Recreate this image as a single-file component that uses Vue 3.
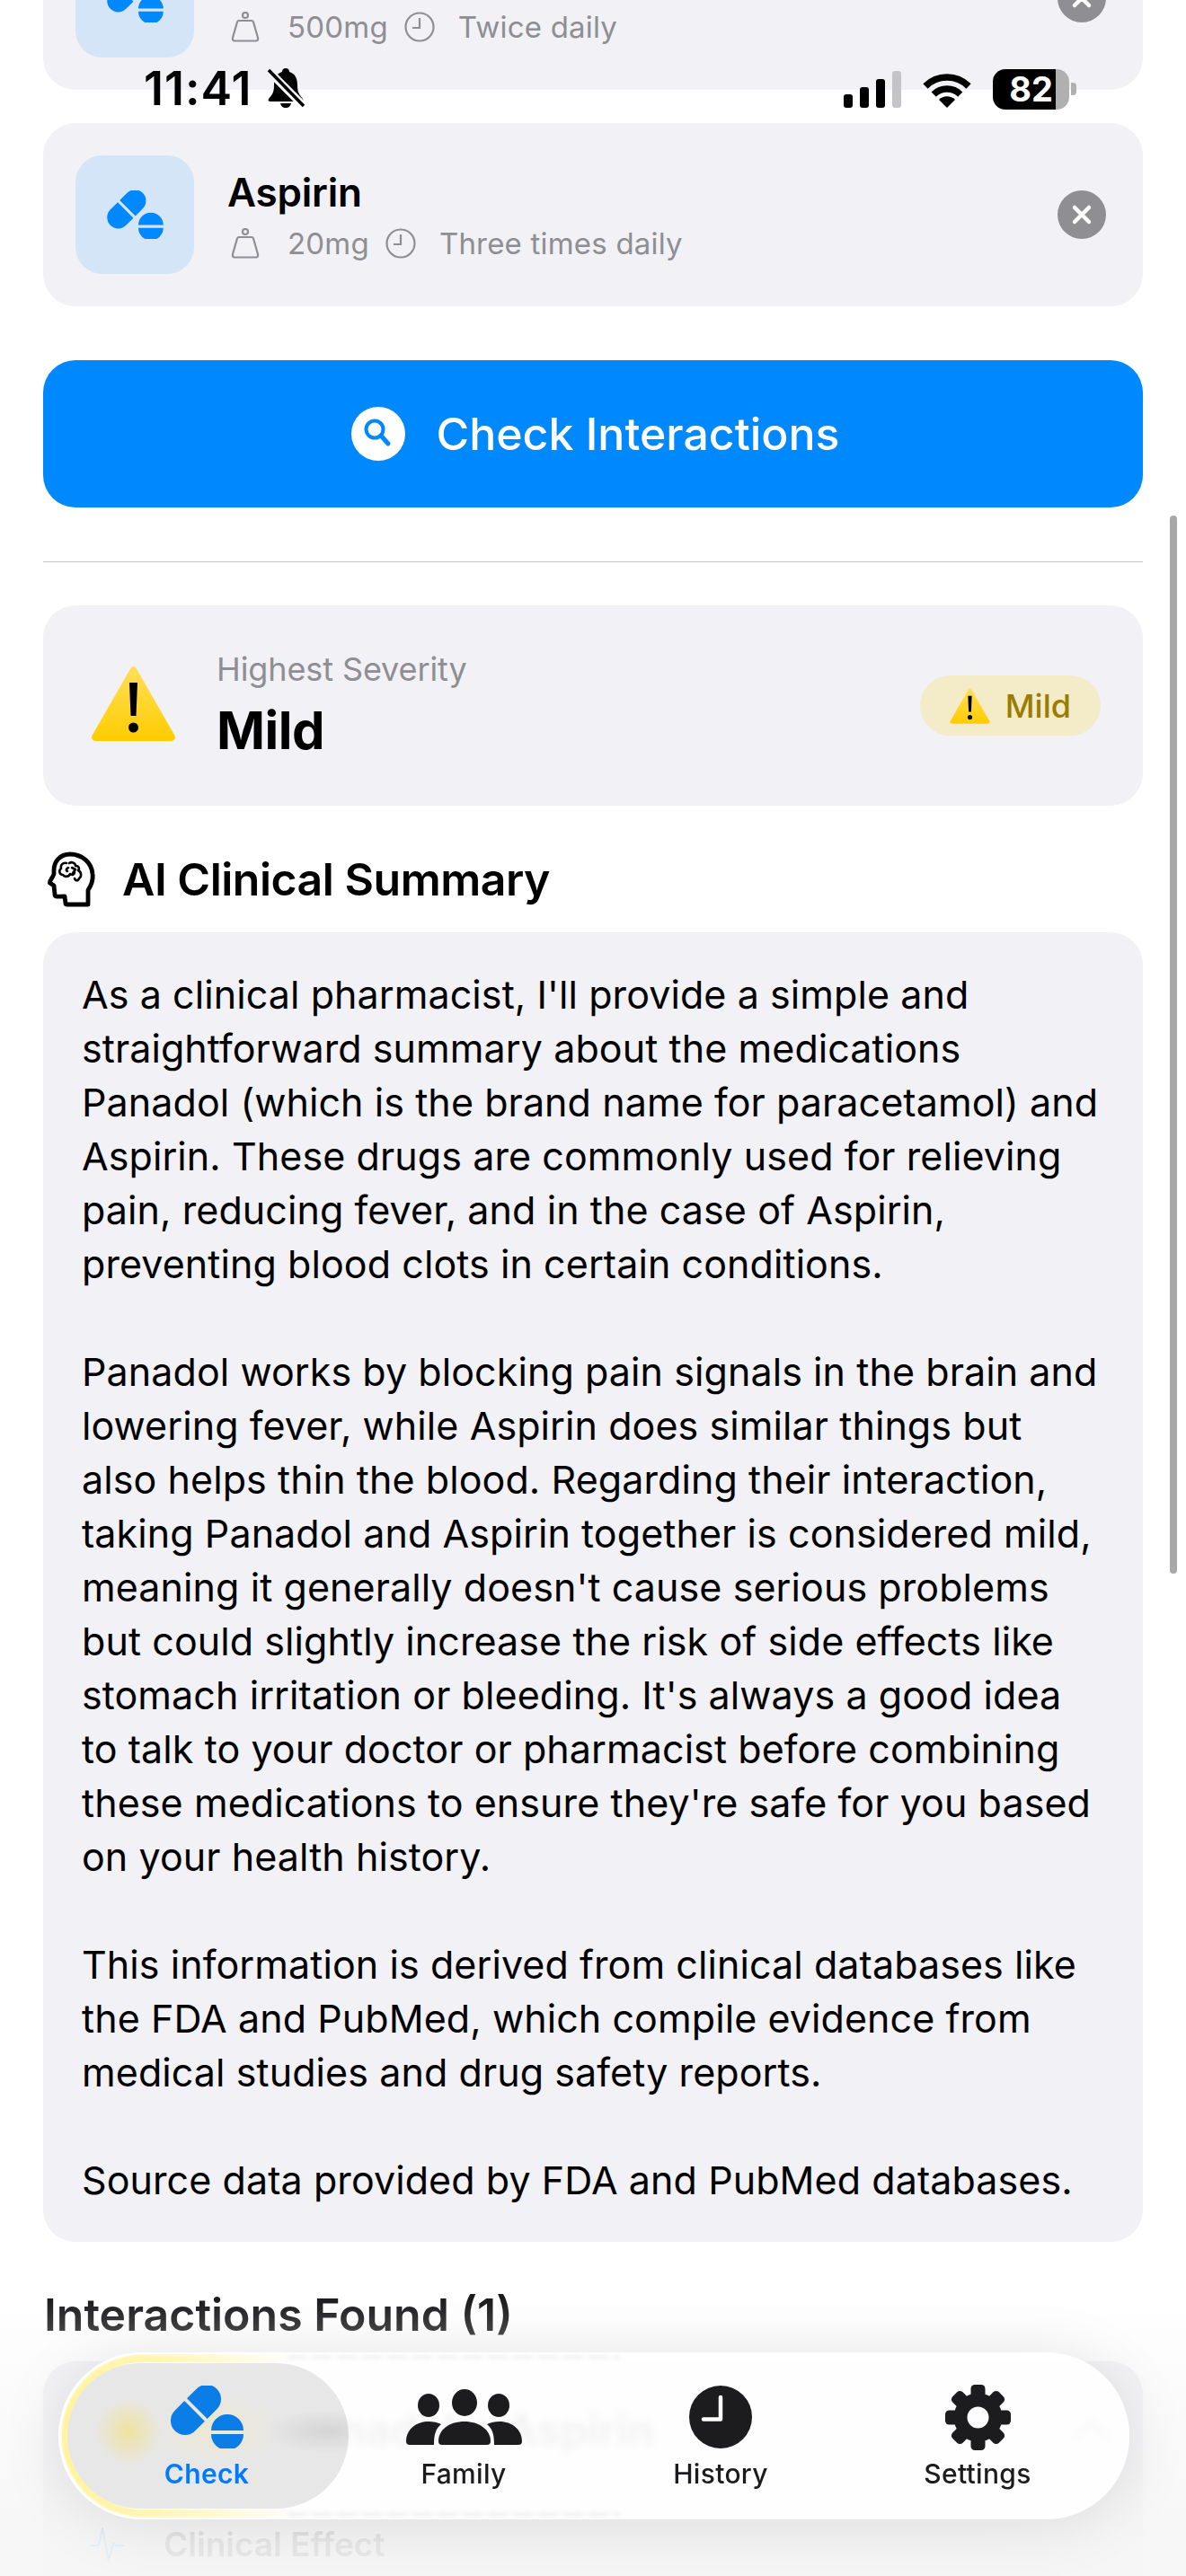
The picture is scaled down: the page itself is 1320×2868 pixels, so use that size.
<template>
  <div class="screen">
    <svg class="sprite" width="0" height="0">
      <symbol id="pills" viewBox="0 0 81 70">
        <g transform="translate(28 27) rotate(-45)">
          <path d="M-2 -16H-17A16 16 0 0 0 -17 16H-2Z" />
          <path d="M2 -16H17A16 16 0 0 1 17 16H2Z" />
        </g>
        <g transform="translate(63 52)">
          <path d="M-18 -2A18 18 0 0 1 18 -2Z" />
          <path d="M-18 2A18 18 0 0 0 18 2Z" />
        </g>
      </symbol>
      <symbol id="warn" viewBox="0 0 95 83">
        <path d="M47.5 0C49 0 50.500 1.500 51.500 3.500L93.500 77C95 80 93 83 89 83H6C2 83 0 80 1.500 77L43.500 3.500C44.500 1.500 46 0 47.500 0Z" fill="url(#warnfill)" />
        <path d="M43 18H52L50.500 55H44.500Z" fill="#000" />
        <circle cx="47.500" cy="68" r="5.500" fill="#000" />
      </symbol>
      <defs>
        <linearGradient id="warnfill" x1="0" y1="0" x2="0" y2="1">
          <stop offset="0" stop-color="#ffdf5a" />
          <stop offset="1" stop-color="#ffcc00" />
        </linearGradient>
      </defs>
    </svg>

    <main class="content">
      <div v-for="med in meds" :key="med.name" class="med-card">
        <div class="med-icon">
          <svg class="pills-sm"><use href="#pills" /></svg>
        </div>
        <div class="med-text">
          <div class="med-name">{{ med.name }}</div>
          <div class="med-meta">
            <svg class="weight" viewBox="0 0 32 34" fill="none" stroke="#8e8e93" stroke-width="2.200">
              <circle cx="16" cy="4" r="3" />
              <path d="M9 10H23Q24.500 10 25 11.500L30 29Q30.500 32.500 28 32.500H4Q1.500 32.500 2 29L7 11.500Q7.500 10 9 10Z" />
            </svg>
            <span>{{ med.dose }}</span>
            <svg class="clock" viewBox="0 0 34 34" fill="none" stroke="#8e8e93" stroke-width="2.200">
              <circle cx="17" cy="17" r="15.500" />
              <path d="M17 7V18H9" />
            </svg>
            <span>{{ med.freq }}</span>
          </div>
        </div>
        <button class="remove">
          <svg viewBox="0 0 54 54" width="54" height="54" stroke="#fff" stroke-width="4.500" stroke-linecap="round">
            <path d="M19 19L35 35M35 19L19 35" />
          </svg>
        </button>
      </div>

      <button class="check-btn">
        <span class="search-dot">
          <svg viewBox="0 0 60 60" width="60" height="60" fill="none" stroke="#0088ff" stroke-width="4" stroke-linecap="round">
            <circle cx="26" cy="25" r="9.500" />
            <path d="M33 32L41 41" stroke-width="5" />
          </svg>
        </span>
        Check Interactions
      </button>

      <div class="divider"></div>

      <section class="severity">
        <svg class="warn-lg"><use href="#warn" /></svg>
        <div class="sev-text">
          <div class="sev-label">Highest Severity</div>
          <div class="sev-value">Mild</div>
        </div>
        <div class="badge">
          <svg class="warn-sm"><use href="#warn" /></svg>
          Mild
        </div>
      </section>

      <h2 class="ai-title">
        <svg viewBox="12 18 54 62" width="54" height="62" fill="none" stroke="#000" stroke-linejoin="round" stroke-linecap="round">
          <path stroke-width="4.800" d="M58 77V61C62 55 64 50 63 43C62 30 51 21 38 21C26 21 20 30 20 39V43C19 47 15 50 15.500 53L20 56L21 66C21 69 24 68 32 68L33 76C33 77 34 77 35 77Z" />
          <path stroke-width="2.600" d="M34 31C30 30 27 33 28 37C25 39 26 44 30 44C32 47 37 46 38 43C41 45 43 43 43 41M37 31C40 29 44 31 44 34C48 34 49 37 47 39C51 41 51 46 48 48C47 51 44 51 43 48M36 36C34 37 33 39 35 40M40 36L44 38L41 42" />
        </svg>
        AI Clinical Summary
      </h2>

      <section class="summary">
        <p v-for="(para, i) in summary" :key="i">{{ para }}</p>
      </section>

      <h2 class="found-title">Interactions Found (1)</h2>

      <section class="found-card">
        <div class="found-head">
          <svg class="warn-row"><use href="#warn" /></svg>
          <span class="found-name">Panadol + Aspirin</span>
          <svg class="chev" viewBox="0 0 44 24" fill="none" stroke="#555" stroke-width="4" stroke-linecap="round" stroke-linejoin="round">
            <path d="M4 20L22 4L40 20" />
          </svg>
        </div>
        <div class="effect">
          <svg viewBox="0 0 38 40" width="38" height="40" fill="none" stroke="#0088ff" stroke-width="2" stroke-linecap="round" stroke-linejoin="round">
            <path d="M1 21H10L14 2L21 38L26 18L29 21H37" />
          </svg>
          <span>Clinical Effect</span>
        </div>
      </section>
    </main>

    <div class="scrollbar"></div>

    <header class="status">
      <span class="time">11:41</span>
      <svg class="bell" viewBox="0 0 44 46">
        <mask id="bellcut">
          <rect width="44" height="46" fill="#fff" />
          <path d="M2 3L42 43" stroke="#000" stroke-width="9" />
        </mask>
        <path mask="url(#bellcut)" d="M22 1C25 1 26 3 26 5C33 7 35 13 35 20C35 28 37 30 41 35C42 37 41 38 39 38H5C3 38 2 37 3 35C7 30 9 28 9 20C9 13 11 7 18 5C18 3 19 1 22 1ZM16 40H28C27 44 25 45 22 45C19 45 17 44 16 40Z" />
        <path d="M3 3L42 43" stroke="#000" stroke-width="3.500" />
      </svg>
      <div class="status-right">
        <div class="signal">
          <i class="b1"></i><i class="b2"></i><i class="b3"></i><i class="b4"></i>
        </div>
        <svg class="wifi" viewBox="0 0 58 42" fill="none" stroke="#000" stroke-width="7.500">
          <path d="M5 18A34 34 0 0 1 53 18" />
          <path d="M14.200 27.200A21 21 0 0 1 43.800 27.200" />
          <path d="M29 42L20 33A12.700 12.700 0 0 1 38 33Z" fill="#000" stroke="none" />
        </svg>
        <div class="battery">
          <div class="batt-body">82</div>
          <div class="batt-nub"></div>
        </div>
      </div>
    </header>

    <div class="fade"></div>

    <nav class="tabbar">
      <div class="glow"></div>
      <div class="sliver top"></div>
      <div class="sliver bottom"></div>
      <div class="active-pill"></div>
      <div class="tab on">
        <div class="tab-icon">
          <svg class="pills-lg"><use href="#pills" /></svg>
        </div>
        <span>Check</span>
      </div>
      <div class="tab">
        <div class="tab-icon">
          <svg viewBox="0 0 129 62" width="129" height="62" fill="#1c1c1e">
            <ellipse cx="65" cy="15" rx="14" ry="15" />
            <ellipse cx="25" cy="18" rx="12" ry="13" />
            <ellipse cx="103" cy="18" rx="12" ry="13" />
            <path d="M36 58C36 45 48 36 65 36C81 36 94 45 94 58Q94 62 90 62H40Q36 62 36 58Z" />
            <path d="M0 58C0 45 11 36 25 36C30 36 35 37 39 39C33 44 31 50 31 62H4Q0 62 0 58Z" />
            <path d="M129 58C129 45 118 36 104 36C99 36 94 37 90 39C96 44 98 50 98 62H125Q129 62 129 58Z" />
          </svg>
        </div>
        <span>Family</span>
      </div>
      <div class="tab">
        <div class="tab-icon">
          <svg viewBox="0 0 70 70" width="70" height="70">
            <circle cx="35" cy="35" r="35" fill="#1c1c1e" />
            <path d="M35 13V37.500H16" fill="none" stroke="#fff" stroke-width="4.500" stroke-linecap="round" stroke-linejoin="round" />
          </svg>
        </div>
        <span>History</span>
      </div>
      <div class="tab">
        <div class="tab-icon">
          <svg viewBox="0 0 73 73" width="73" height="73">
            <g transform="translate(36.500 36.500)" fill="#1c1c1e">
              <circle r="27" />
              <rect v-for="a in gearAngles" :key="a" x="-8" y="-36.500" width="16" height="16" rx="4.500" :transform="`rotate(${a})`" />
              <circle r="12" fill="#fdfdfe" />
            </g>
          </svg>
        </div>
        <span>Settings</span>
      </div>
    </nav>
  </div>
</template>

<script setup>
const meds = [
  { name: 'Panadol', dose: '500mg', freq: 'Twice daily' },
  { name: 'Aspirin', dose: '20mg', freq: 'Three times daily' }
];

const summary = [
  "As a clinical pharmacist, I'll provide a simple and\nstraightforward summary about the medications\nPanadol (which is the brand name for paracetamol) and\nAspirin. These drugs are commonly used for relieving\npain, reducing fever, and in the case of Aspirin,\npreventing blood clots in certain conditions.",
  "Panadol works by blocking pain signals in the brain and\nlowering fever, while Aspirin does similar things but\nalso helps thin the blood. Regarding their interaction,\ntaking Panadol and Aspirin together is considered mild,\nmeaning it generally doesn't cause serious problems\nbut could slightly increase the risk of side effects like\nstomach irritation or bleeding. It's always a good idea\nto talk to your doctor or pharmacist before combining\nthese medications to ensure they're safe for you based\non your health history.",
  "This information is derived from clinical databases like\nthe FDA and PubMed, which compile evidence from\nmedical studies and drug safety reports.",
  "Source data provided by FDA and PubMed databases."
];

const gearAngles = [0, 45, 90, 135, 180, 225, 270, 315];
</script>

<style>
html, body {
  margin: 0;
  background: #fff;
}
</style>

<style scoped>
.screen {
  position: relative;
  width: 1320px;
  height: 2868px;
  overflow: hidden;
  background: #fff;
  font-family: Inter, "Liberation Sans", sans-serif;
  color: #000;
}
.sprite {
  position: absolute;
}
.content {
  padding: 0 48px;
  margin-top: -104px;
}
.med-card {
  display: flex;
  align-items: center;
  height: 204px;
  box-sizing: border-box;
  padding: 0 41px 0 36px;
  margin-bottom: 37px;
  background: #f1f1f6;
  border-radius: 36px;
}
.med-icon {
  width: 132px;
  height: 132px;
  flex: none;
  display: flex;
  align-items: center;
  justify-content: center;
  background: #d4e5f8;
  border-radius: 30px;
}
.pills-sm {
  width: 63px;
  height: 54px;
  fill: #0088ff;
}
.med-text {
  flex: 1;
  margin-left: 37px;
}
.med-name {
  font-size: 44px;
  font-weight: 600;
  line-height: 54px;
  margin-bottom: 10px;
  letter-spacing: -0.2px;
}
.med-meta {
  display: flex;
  align-items: center;
  font-size: 33px;
  line-height: 40px;
  color: #8e8e93;
  letter-spacing: 0.2px;
}
.weight {
  width: 32px;
  height: 34px;
  margin: 0 31px 0 4px;
}
.clock {
  width: 34px;
  height: 34px;
  margin: 0 26px 0 18px;
}
.remove {
  width: 54px;
  height: 54px;
  padding: 0;
  border: 0;
  border-radius: 50%;
  background: #8e8e93;
}
.check-btn {
  display: flex;
  align-items: center;
  justify-content: center;
  gap: 34px;
  width: 100%;
  height: 164px;
  margin-top: 60px;
  padding: 0 0 0 6px;
  border: 0;
  border-radius: 36px;
  background: #0088ff;
  color: #fff;
  font-family: inherit;
  font-size: 50px;
  font-weight: 500;
}
.search-dot {
  width: 60px;
  height: 60px;
  border-radius: 50%;
  background: #fff;
}
.divider {
  height: 1px;
  margin-top: 60px;
  background: #c6c6c8;
}
.severity {
  display: flex;
  align-items: center;
  height: 223px;
  margin-top: 48px;
  padding: 0 47px 0 53px;
  box-sizing: border-box;
  background: #f1f1f6;
  border-radius: 36px;
}
.warn-lg {
  width: 95px;
  height: 83px;
  flex: none;
  margin-bottom: 4px;
}
.sev-text {
  flex: 1;
  margin-left: 45px;
}
.sev-label {
  font-size: 36px;
  line-height: 44px;
  color: #8e8e93;
  letter-spacing: -0.1px;
}
.sev-value {
  font-size: 58px;
  font-weight: 700;
  line-height: 72px;
  margin-top: 10px;
  letter-spacing: -0.5px;
}
.badge {
  display: flex;
  align-items: center;
  gap: 17px;
  height: 67px;
  padding: 0 33px;
  border-radius: 34px;
  background: #f4ebc9;
  color: #9a7d00;
  font-size: 36px;
  font-weight: 500;
}
.warn-sm {
  width: 45px;
  height: 40px;
}
.ai-title {
  display: flex;
  align-items: center;
  gap: 30px;
  height: 62px;
  margin: 51px 0 28px 4px;
  font-size: 50px;
  font-weight: 600;
  letter-spacing: -0.5px;
}
.summary {
  padding: 39px 43px;
  background: #f1f1f6;
  border-radius: 36px;
  font-size: 43px;
  line-height: 60px;
  letter-spacing: 0.08px;
}
.summary p {
  margin: 0 0 60px;
  white-space: pre-line;
}
.summary p:last-child {
  margin-bottom: 0;
}
.found-title {
  margin: 51px 0 22px 1px;
  font-size: 50px;
  font-weight: 600;
  line-height: 60px;
  color: #1c1c1e;
}
.found-card {
  height: 400px;
  padding: 0 36px;
  background: #f1f1f6;
  border-radius: 36px;
}
.found-head {
  display: flex;
  align-items: center;
  height: 152px;
}
.warn-row {
  width: 40px;
  height: 44px;
  margin-left: 60px;
}
.found-name {
  flex: 1;
  margin-left: 136px;
  font-size: 48px;
  font-weight: 600;
}
.chev {
  width: 44px;
  height: 24px;
}
.effect {
  display: flex;
  align-items: center;
  gap: 44px;
  margin: 29px 0 0 16px;
  font-size: 37px;
  font-weight: 600;
}
.scrollbar {
  position: absolute;
  left: 1302px;
  top: 574px;
  width: 8px;
  height: 1178px;
  border-radius: 4px;
  background: #a8a8a8;
}
.status {
  position: absolute;
  left: 160px;
  top: 70px;
  right: 122px;
  display: flex;
  align-items: center;
  height: 56px;
}
.time {
  font-size: 52px;
  font-weight: 600;
  letter-spacing: 1px;
}
.bell {
  width: 44px;
  height: 46px;
  margin-left: 15px;
}
.status-right {
  display: flex;
  align-items: flex-end;
  margin-left: auto;
  gap: 22px;
}
.signal {
  display: flex;
  align-items: flex-end;
  gap: 8px;
  height: 41px;
}
.signal i {
  display: block;
  width: 10px;
  background: #000;
  border-radius: 3px;
}
.signal .b1 { height: 15px; }
.signal .b2 { height: 23px; }
.signal .b3 { height: 32px; }
.signal .b4 { height: 41px; background: #c4c4c8; }
.wifi {
  width: 58px;
  height: 42px;
}
.battery {
  display: flex;
  align-items: center;
  gap: 2px;
  margin-bottom: -2px;
}
.batt-body {
  width: 85px;
  height: 45px;
  border-radius: 14px;
  background: linear-gradient(90deg, #000 82.4%, #b0b0b0 82.4%);
  color: #fff;
  font-size: 38px;
  font-weight: 700;
  line-height: 45px;
  text-align: center;
}
.batt-nub {
  width: 6px;
  height: 14px;
  border-radius: 0 4px 4px 0;
  background: #b0b0b0;
}
.fade {
  position: absolute;
  left: 0;
  right: 0;
  top: 2560px;
  bottom: 0;
  background: linear-gradient(180deg,
    rgba(246, 246, 246, 0) 0,
    rgba(246, 246, 246, 0.3) 60px,
    rgba(246, 246, 246, 0.55) 140px,
    rgba(246, 246, 246, 0.94) 270px);
}
.tabbar {
  position: absolute;
  left: 65px;
  top: 2619px;
  width: 1192px;
  height: 186px;
  box-sizing: border-box;
  display: grid;
  grid-template-columns: repeat(4, 286px);
  padding: 36px 0 0 22px;
  border-radius: 93px;
  background: rgba(255, 255, 255, 0.88);
  backdrop-filter: blur(4px);
  box-shadow: 0 6px 70px rgba(0, 0, 0, 0.1);
}
.glow {
  position: absolute;
  inset: 2px 0 2px 3px;
  border-radius: 91px;
  padding: 9px 0 9px 9px;
  background: linear-gradient(90deg, #fff3a0 0, #fff6b8 10%, rgba(255, 246, 184, 0) 22%);
  -webkit-mask: linear-gradient(#000 0 0) content-box, linear-gradient(#000 0 0);
  -webkit-mask-composite: xor;
  mask-composite: exclude;
  filter: blur(1.5px);
}
.active-pill {
  position: absolute;
  left: 10px;
  top: 12px;
  width: 313px;
  height: 162px;
  border-radius: 81px;
  background:
    radial-gradient(ellipse 38px 38px at 68px 76px, rgba(240, 226, 150, 0.9), rgba(240, 226, 150, 0) 100%),
    radial-gradient(ellipse 70px 40px at 165px 72px, rgba(240, 232, 190, 0.6), rgba(240, 232, 190, 0) 100%),
    radial-gradient(ellipse 70px 24px at 290px 76px, rgba(205, 205, 205, 0.7), rgba(205, 205, 205, 0) 100%),
    #e7e7e8;
}
.sliver {
  position: absolute;
  left: 255px;
  width: 370px;
  height: 5px;
  background: repeating-linear-gradient(90deg, rgba(0, 0, 0, 0.05) 0 20px, rgba(0, 0, 0, 0.015) 20px 28px);
  filter: blur(2px);
}
.sliver.top {
  top: 3px;
}
.sliver.bottom {
  bottom: 3px;
}
.tab {
  position: relative;
  display: flex;
  flex-direction: column;
  align-items: center;
  font-size: 30px;
  font-weight: 500;
  line-height: 36px;
  color: #1c1c1e;
  letter-spacing: 0.3px;
}
.tab.on {
  color: #007aff;
  font-weight: 600;
}
.tab-icon {
  display: flex;
  align-items: center;
  justify-content: center;
  height: 72px;
  margin-bottom: 9px;
}
.pills-lg {
  width: 81px;
  height: 70px;
  fill: #0a7de6;
}
</style>
